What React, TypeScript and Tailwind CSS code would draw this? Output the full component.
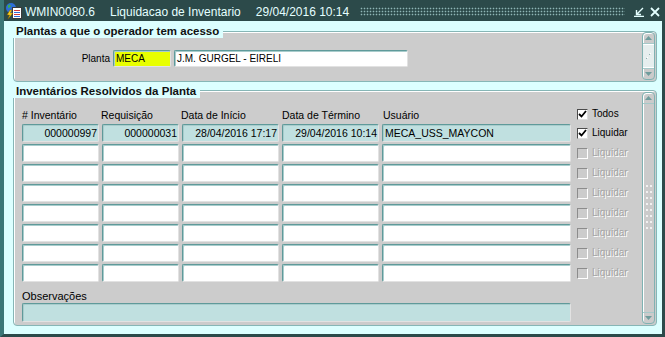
import React from 'react'

const cell = 'border border-t-[#5f9a9a] border-l-[#5f9a9a] border-b-[#e2e2e2] border-r-[#e2e2e2] rounded-[2px] shadow-[inset_1px_1px_0_#a9cccc]'

const rows = [
  { inv: '000000997', req: '000000031', ini: '28/04/2016 17:17', fim: '29/04/2016 10:14', usr: 'MECA_USS_MAYCON' },
  null, null, null, null, null, null, null,
]

function Tri({ up }: { up?: boolean }) {
  return (
    <svg width="7" height="4" viewBox="0 0 7 4">
      <polygon points={up ? '0,4 3.5,0 7,4' : '0,0 7,0 3.5,4'} fill="#6f9c9c" />
    </svg>
  )
}

function ScrollBar({ small }: { small?: boolean }) {
  return (
    <div className="w-[13px] flex flex-col rounded-[4px] border border-[#7fb2b2] bg-[#cbcbcb] shadow-[inset_1px_1px_0_#fff] overflow-hidden">
      <div className="h-[11px] flex items-center justify-center border-b border-[#a6c9c9]">
        <Tri up />
      </div>
      {small ? (
        <div className="flex-1 flex items-center justify-center bg-[#e6eeee] border-t border-b border-white">
          <svg width="6" height="8" viewBox="0 0 6 8">
            <rect x="4" y="1" width="1" height="1" fill="#fff" />
            <rect x="1" y="5" width="1" height="1" fill="#fff" />
            <rect x="3" y="2" width="1" height="1" fill="#8fb0b0" />
            <rect x="0" y="6" width="1" height="1" fill="#8fb0b0" />
          </svg>
        </div>
      ) : (
        <div className="flex-1 flex items-center justify-center">
          <div className="w-[7px] h-[50px] bg-[radial-gradient(circle,#ffffff_0.6px,transparent_1px)] bg-size-[4px_6px]" />
        </div>
      )}
      <div className="h-[11px] flex items-center justify-center border-t border-[#a6c9c9]">
        <Tri />
      </div>
    </div>
  )
}

function Check({ on, disabled, label }: { on?: boolean; disabled?: boolean; label: string }) {
  return (
    <div className="ml-[3px] flex items-center gap-[4px]">
      {disabled ? (
        <div className="w-[11px] h-[11px] border border-t-[#8c8c8c] border-l-[#8c8c8c] border-b-white border-r-white" />
      ) : (
        <div className="w-[11px] h-[11px] bg-white border border-t-[#4a4a4a] border-l-[#4a4a4a] border-b-[#dcdcdc] border-r-[#dcdcdc] flex items-center justify-center">
          {on && (
            <svg width="9" height="8" viewBox="0 0 9 8">
              <path d="M1 4 L3.5 6.5 L8 1" stroke="#000" strokeWidth="1.8" fill="none" />
            </svg>
          )}
        </div>
      )}
      <span className={disabled ? 'text-[10px] leading-[12px] text-[#a4a4a4] [text-shadow:1px_1px_0_#fff]' : 'text-[10px] leading-[12px] text-black'}>
        {label}
      </span>
    </div>
  )
}

function AppIcon() {
  return (
    <svg width="18" height="18" viewBox="0 0 18 18">
      <circle cx="6" cy="6" r="5" fill="#2d6fd8" />
      <path d="M3 3 Q5 2 6 4 Q5 6 3 6 Z M7 7 Q9 6 10 8 L8 10 Z" fill="#3fae4a" />
      <rect x="7.5" y="5.5" width="9" height="11" fill="#fff" stroke="#3a3a3a" />
      <rect x="9" y="8" width="6" height="1" fill="#d23b3b" />
      <rect x="9" y="10" width="6" height="1" fill="#2d6fd8" />
      <rect x="9" y="12" width="6" height="1" fill="#d23b3b" />
      <rect x="9" y="14" width="6" height="1" fill="#2d6fd8" />
      <polygon points="5,8 2,13 4.5,13 3,17 8,11 5.5,11 7,8" fill="#ffd21f" stroke="#7a5a00" strokeWidth="0.5" />
    </svg>
  )
}

export default function App() {
  return (
    <div className="w-[665px] h-[337px] bg-[#dcffff] border-l-[4px] border-l-[#3b7777] border-r-[3px] border-r-[#2c4a4a] border-b-[3px] border-b-[#2c4a4a] flex flex-col font-['Liberation_Sans',Arial,sans-serif] text-black overflow-hidden">
      {/* title bar */}
      <div className="h-[21px] shrink-0 bg-[#2c4a4a] flex items-center text-[#e4ffff] text-[12px] leading-[14px] whitespace-nowrap">
        <div className="shrink-0 ml-[1px] pt-[1px]"><AppIcon /></div>
        <div className="shrink-0 ml-[2px] pt-[2px] flex gap-[15px]">
          <span>WMIN0080.6</span>
          <span>Liquidacao de Inventario</span>
          <span>29/04/2016 10:14</span>
        </div>
        <div className="shrink-0 ml-[11px] mt-[2px] w-[265px] h-[9px] bg-[radial-gradient(circle,#8fb6b6_0.7px,transparent_1.1px)] bg-size-[3px_3px]" />
        <svg className="shrink-0 ml-[9px] mt-[2px]" width="11" height="10" viewBox="0 0 11 10">
          <path d="M9 1 L3 7 M2.5 3 L2.5 7.5 L7 7.5 M0 9.5 L10 9.5" stroke="#e4ffff" strokeWidth="1.4" fill="none" />
        </svg>
        <svg className="shrink-0 ml-[5px] mt-[2px]" width="10" height="10" viewBox="0 0 10 10">
          <path d="M1 1 L9 9 M9 1 L1 9" stroke="#e4ffff" strokeWidth="1.8" fill="none" />
        </svg>
      </div>

      <div className="flex-1 flex flex-col pl-[9px] pr-[5px]">
        {/* Plantas */}
        <div className="relative mt-[10px] h-[51px] flex rounded-[4px] border border-[#86b6b6] bg-[#cccccc] shadow-[inset_1px_1px_0_#fff]">
          <div className="absolute left-[-1px] top-[-7px] h-[13px] bg-[#dcffff] pl-[3px] pr-[4px] text-[11.5px] leading-[13px] font-bold text-[#111] whitespace-nowrap">
            Plantas a que o operador tem acesso
          </div>
          <div className="flex-1 flex items-start pt-[18px] text-[10px] leading-[17px]">
            <span className="w-[96px] text-right">Planta</span>
            <div className={`ml-[3px] w-[58px] h-[17px] bg-[#e8ff00] pl-[2px] leading-[15px] ${cell}`}>MECA</div>
            <div className={`ml-[3px] w-[234px] h-[17px] bg-white pl-[2px] leading-[15px] ${cell}`}>J.M. GURGEL - EIRELI</div>
          </div>
          <div className="mr-[1px] mb-[1px] flex">
            <ScrollBar small />
          </div>
        </div>

        {/* Inventários */}
        <div className="relative mt-[8px] flex rounded-[4px] border border-[#86b6b6] bg-[#cccccc] shadow-[inset_1px_1px_0_#fff]">
          <div className="absolute left-[-1px] top-[-6px] h-[13px] bg-[#dcffff] pl-[3px] pr-[4px] text-[11.5px] leading-[13px] font-bold text-[#111] whitespace-nowrap">
            Inventários Resolvidos da Planta
          </div>
          <div className="flex-1 flex flex-col pl-[8px] pt-[18px] pb-[3px] text-[10.5px] whitespace-nowrap">
            <div className="h-[14px] grid grid-cols-[77px_77px_97px_97px_189px_auto] gap-x-[3px] items-start leading-[12px]">
              <span>{'# Inventário'}</span>
              <span className="-ml-[1px]">Requisição</span>
              <span className="-ml-[1px]">Data de Início</span>
              <span>Data de Término</span>
              <span className="ml-[1px]">Usuário</span>
              <div className="-mt-[1px]"><Check on label="Todos" /></div>
            </div>
            <div className="mt-[1px] flex flex-col gap-[2px]">
              {rows.map((r, i) => (
                <div key={i} className="h-[18px] grid grid-cols-[77px_77px_97px_97px_189px_auto] gap-x-[3px] leading-[16px]">
                  <div className={`${cell} ${r ? 'bg-[#c0e0e0]' : 'bg-white'} text-right pr-[1px]`}>{r?.inv}</div>
                  <div className={`${cell} ${r ? 'bg-[#c0e0e0]' : 'bg-white'} text-right pr-[1px]`}>{r?.req}</div>
                  <div className={`${cell} ${r ? 'bg-[#c0e0e0]' : 'bg-white'} text-right pr-[1px]`}>{r?.ini}</div>
                  <div className={`${cell} ${r ? 'bg-[#c0e0e0]' : 'bg-white'} text-right pr-[1px]`}>{r?.fim}</div>
                  <div className={`${cell} ${r ? 'bg-[#c0e0e0]' : 'bg-white'} pl-[2px]`}>{r?.usr}</div>
                  <Check on={!!r} disabled={!r} label="Liquidar" />
                </div>
              ))}
            </div>
            <div className="mt-[8px] text-[11px] leading-[12px]">Observações</div>
            <div className={`mt-[1px] w-[549px] h-[19px] bg-[#c0e0e0] ${cell}`} />
          </div>
          <div className="mr-[1px] my-[1px] flex">
            <ScrollBar />
          </div>
        </div>
      </div>
    </div>
  )
}
